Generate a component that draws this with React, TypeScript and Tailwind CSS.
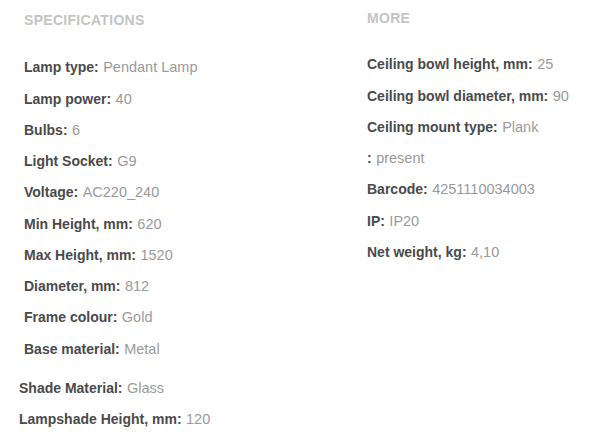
const specs = [
  { label: "Lamp type", value: "Pendant Lamp" },
  { label: "Lamp power", value: "40" },
  { label: "Bulbs", value: "6" },
  { label: "Light Socket", value: "G9" },
  { label: "Voltage", value: "AC220_240" },
  { label: "Min Height, mm", value: "620" },
  { label: "Max Height, mm", value: "1520" },
  { label: "Diameter, mm", value: "812" },
  { label: "Frame colour", value: "Gold" },
  { label: "Base material", value: "Metal" },
];

const extraSpecs = [
  { label: "Shade Material", value: "Glass" },
  { label: "Lampshade Height, mm", value: "120" },
];

const more = [
  { label: "Ceiling bowl height, mm", value: "25" },
  { label: "Ceiling bowl diameter, mm", value: "90" },
  { label: "Ceiling mount type", value: "Plank" },
  { label: "", value: "present" },
  { label: "Barcode", value: "4251110034003" },
  { label: "IP", value: "IP20" },
  { label: "Net weight, kg", value: "4,10" },
];

const Row = ({ label, value }: { label: string; value: string }) => (
  <div className="h-[31.25px] leading-[31.25px] whitespace-nowrap">
    <span className="text-[14px] font-bold text-[#4a4a4a]">{label}:</span>{" "}
    <span className="text-[14.5px] text-[#9a9a9a]">{value}</span>
  </div>
);

export default function App() {
  return (
    <div className="w-[606px] h-[448px] bg-white flex font-['Liberation_Sans',Arial,sans-serif]">
      <div className="w-[367px] pt-[12px]">
        <h2 className="pl-[24px] text-[14px] leading-[16px] font-bold tracking-[0.3px] text-[#c4c4c4]">
          SPECIFICATIONS
        </h2>
        <div className="pl-[24px] mt-[23.4px]">
          {specs.map((s) => (
            <Row key={s.label} label={s.label} value={s.value} />
          ))}
        </div>
        <div className="pl-[19px] mt-[7.8px]">
          {extraSpecs.map((s) => (
            <Row key={s.label} label={s.label} value={s.value} />
          ))}
        </div>
      </div>

      <div className="flex-1 pt-[10px]">
        <h2 className="text-[14px] leading-[16px] font-bold tracking-[0.3px] text-[#c4c4c4]">
          MORE
        </h2>
        <div className="mt-[22.4px]">
          {more.map((s, i) => (
            <Row key={i} label={s.label} value={s.value} />
          ))}
        </div>
      </div>
    </div>
  );
}
